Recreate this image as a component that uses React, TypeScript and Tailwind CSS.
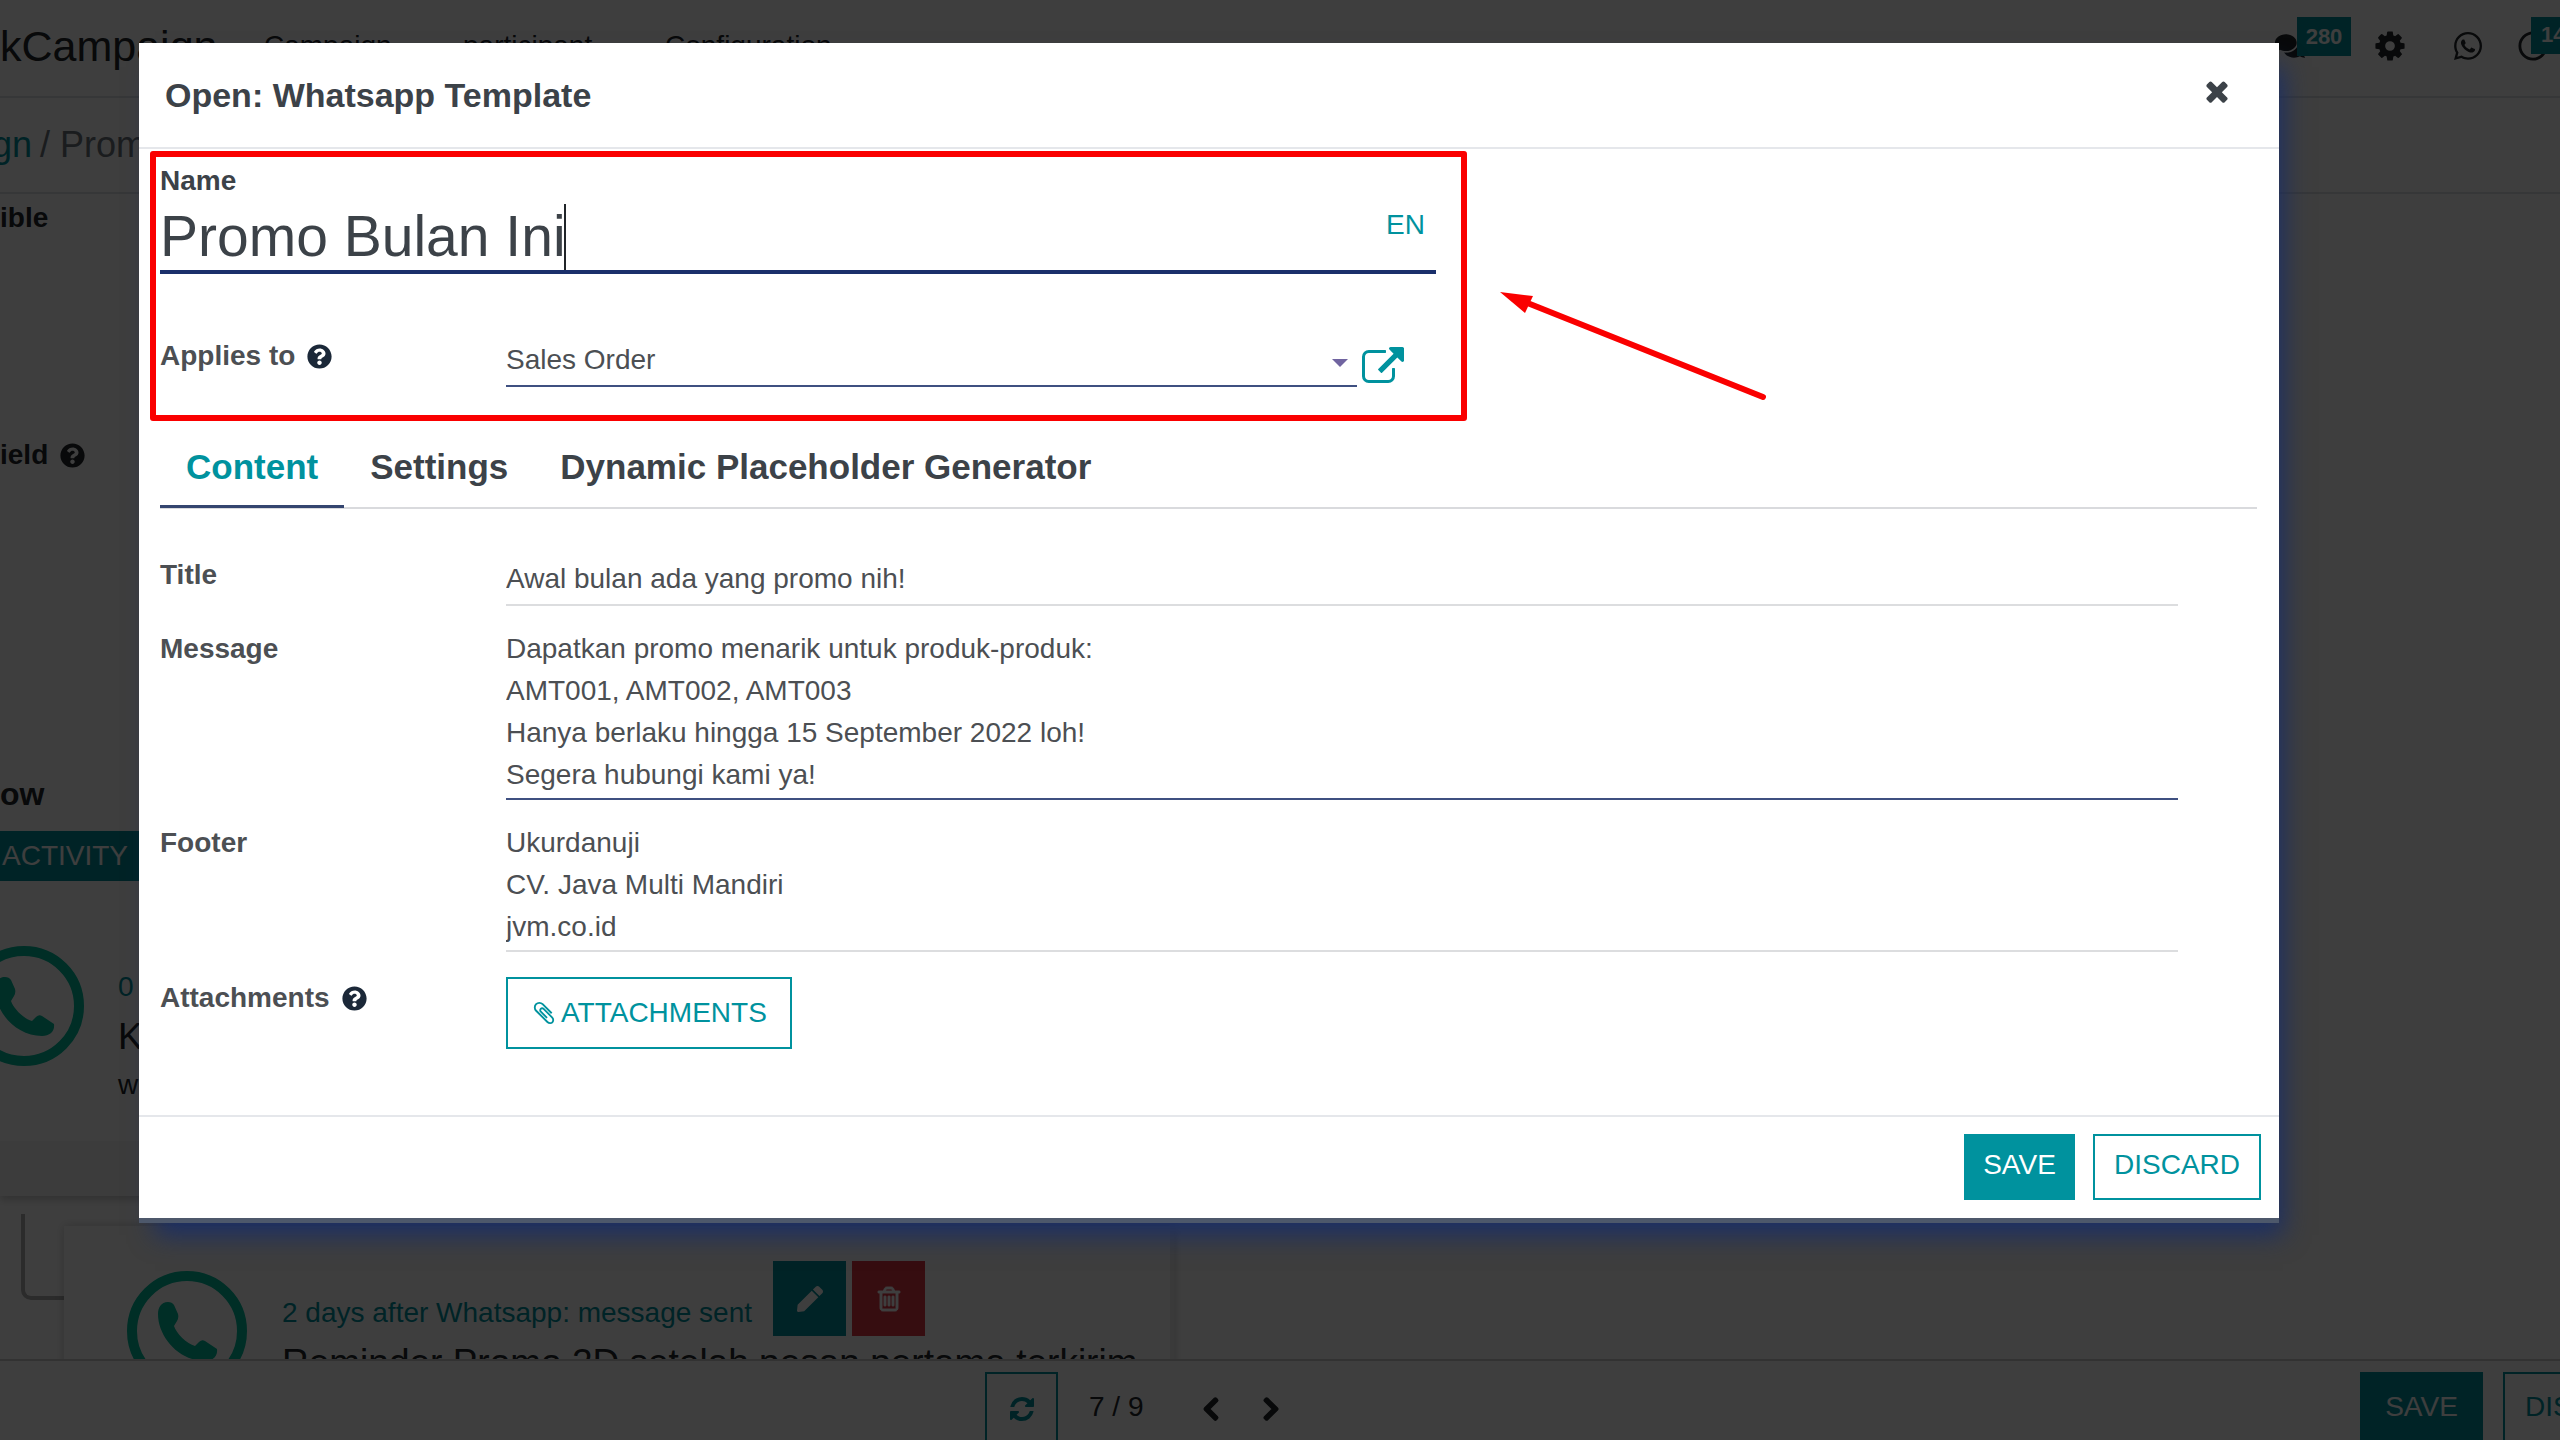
import React, { useState } from 'react';
import { FaChevronLeft, FaChevronRight, FaComments, FaPen, FaQuestionCircle, FaRegClock, FaWhatsapp } from 'react-icons/fa';

const ICONS = {
  close:
    'M1490 1322q0 40-28 68l-136 136q-28 28-68 28t-68-28l-294-294-294 294q-28 28-68 28t-68-28l-136-136q-28-28-28-68t28-68l294-294-294-294q-28-28-28-68t28-68l136-136q28-28 68-28t68 28l294 294 294-294q28-28 68-28t68 28l136 136q28 28 28 68t-28 68l-294 294 294 294q28 28 28 68z',
  trash:
    'M704 736v576q0 14-9 23t-23 9h-64q-14 0-23-9t-9-23v-576q0-14 9-23t23-9h64q14 0 23 9t9 23zm256 0v576q0 14-9 23t-23 9h-64q-14 0-23-9t-9-23v-576q0-14 9-23t23-9h64q14 0 23 9t9 23zm256 0v576q0 14-9 23t-23 9h-64q-14 0-23-9t-9-23v-576q0-14 9-23t23-9h64q14 0 23 9t9 23zm128 724v-948h-896v948q0 22 7 40.5t14.5 27 10.5 8.5h832q3 0 10.5-8.5t14.5-27 7-40.5zm-672-1076h448l-48-117q-7-9-17-11h-317q-10 2-17 11zm928 32v64q0 14-9 23t-23 9h-96v948q0 83-47 143.5t-113 60.5h-832q-66 0-113-58.5t-47-141.5v-952h-96q-14 0-23-9t-9-23v-64q0-14 9-23t23-9h309l70-167q15-37 54-63t79-26h320q40 0 79 26t54 63l70 167h309q14 0 23 9t9 23z',
  refresh:
    'M1639 1056q0 5-1 7-64 268-268 434.5t-478 166.5q-146 0-282.5-55t-243.5-157l-129 129q-19 19-45 19t-45-19-19-45v-448q0-26 19-45t45-19h448q26 0 45 19t19 45-19 45l-137 137q71 66 161 102t187 36q134 0 250-65t186-179q11-17 53-117 8-23 30-23h192q13 0 22.5 9.5t9.5 22.5zm25-800v448q0 26-19 45t-45 19h-448q-26 0-45-19t-19-45 19-45l138-138q-148-137-349-137-134 0-250 65t-186 179q-11 17-53 117-8 23-30 23h-199q-13 0-22.5-9.5t-9.5-22.5v-7q65-268 270-434.5t480-166.5q146 0 284 55.5t245 156.5l130-129q19-19 45-19t45 19 19 45z',
  external:
    'M1408 928v320q0 119-84.5 203.5t-203.5 84.5h-832q-119 0-203.5-84.5t-84.5-203.5v-832q0-119 84.5-203.5t203.5-84.5h704q14 0 23 9t9 23v64q0 14-9 23t-23 9h-704q-66 0-113 47t-47 113v832q0 66 47 113t113 47h832q66 0 113-47t47-113v-320q0-14 9-23t23-9h64q14 0 23 9t9 23zm384-864v512q0 26-19 45t-45 19-45-19l-176-176-652 652q-10 10-23 10t-23-10l-114-114q-10-10-10-23t10-23l652-652-176-176q-19-19-19-45t19-45 45-19h512q26 0 45 19t19 45z',
  cog:
    'M1152 896q0-106-75-181t-181-75-181 75-75 181 75 181 181 75 181-75 75-181zm512-109v222q0 12-8 23t-20 13l-185 28q-19 54-39 91 35 50 107 138 10 12 10 25t-9 23q-27 37-99 108t-94 71q-12 0-26-9l-138-108q-44 23-91 38-16 136-29 186-7 28-36 28h-222q-14 0-24.5-8.5t-11.5-21.5l-28-184q-49-16-90-37l-141 107q-10 9-25 9-14 0-25-11-126-114-165-168-7-10-7-23 0-12 8-23 15-21 51-66.5t54-70.5q-27-50-41-99l-183-27q-13-2-21-12.5t-8-23.5v-222q0-12 8-23t19-13l186-28q14-46 39-92-40-57-107-138-10-12-10-24 0-10 9-23 26-36 98.5-107.5t94.5-71.5q13 0 26 10l138 107q44-23 91-38 16-136 29-186 7-28 36-28h222q14 0 24.5 8.5t11.5 21.5l28 184q49 16 90 37l142-107q9-9 24-9 13 0 25 10 129 119 165 170 7 8 7 22 0 12-8 23-15 21-51 66.5t-54 70.5q26 50 41 98l183 28q13 2 21 12.5t8 23.5z',
  paperclip:
    'M1596 1385q0 117-79 196t-196 79q-135 0-235-100l-777-776q-113-115-113-271 0-159 110-270t269-111q158 0 273 113l605 606q10 10 10 22 0 16-30.5 46.5t-46.5 30.5q-13 0-23-10l-606-607q-79-77-181-77-106 0-179 75t-73 181q0 105 76 181l776 777q63 63 145 63 64 0 106-42t42-106q0-82-63-145l-581-581q-26-24-60-24-29 0-48 19t-19 48q0 32 25 59l410 410q10 10 10 22 0 16-31 47t-47 31q-12 0-22-10l-410-410q-63-61-63-149 0-82 57-139t139-57q88 0 149 63l581 581q100 98 100 235z',
};

const Icon: React.FC<{ name: keyof typeof ICONS; className?: string }> = ({ name, className }) => (
  <svg viewBox="0 0 1792 1792" fill="currentColor" aria-hidden="true" className={className}>
    <path d={ICONS[name]} />
  </svg>
);

const CallBadge: React.FC = () => (
  <svg viewBox="0 0 120 120" aria-hidden="true" className="h-[120px] w-[120px] shrink-0 text-[#00bb9c]">
    <circle cx="60" cy="60" r="55" fill="none" stroke="currentColor" strokeWidth="10" />
    <path
      d="M41 31C34 31 31 37 31 43C31 66 52 90 78 90C86 90 91 85 90 78L78 70Q75 68 72 71L68 75C60 73 49 62 47 55L50 50Q52 47 51 43L47 34Q45 31 41 31Z"
      fill="currentColor"
    />
  </svg>
);

const tabs = ['Content', 'Settings', 'Dynamic Placeholder Generator'];

const CampaignPage: React.FC = () => (
  <div className="flex h-screen flex-col overflow-hidden whitespace-nowrap bg-white text-[28px] leading-[42px] text-[#212529]">
    <header className="flex h-[98px] shrink-0 items-start justify-between overflow-hidden border-b-2 border-[#dee2e6]">
      <nav className="flex items-center pt-[22px]">
        <span className="w-[264px] text-[43px] leading-[48px]">kCampaign</span>
        <a href="#campaign" className="w-[199px]">Campaign</a>
        <a href="#participant" className="w-[202px]">participant</a>
        <a href="#configuration">Configuration</a>
      </nav>
      <div className="flex items-center pt-[29px]">
        <button aria-label="Messages" className="relative mr-[68px] h-[30px] w-[30px]">
          <FaComments className="h-[30px] w-[30px]" />
          <span className="absolute -top-[14px] left-[22px] h-[39px] w-[54px] bg-[#00929e] text-center text-[22px] font-bold leading-[39px] text-white">280</span>
        </button>
        <button aria-label="Settings" className="mr-[45px]"><Icon name="cog" className="h-[34px] w-[34px]" /></button>
        <button aria-label="Whatsapp" className="mr-[34px]"><FaWhatsapp className="h-[32px] w-[32px]" /></button>
        <button aria-label="Activities" className="relative h-[30px] w-[42px]">
          <FaRegClock className="h-[30px] w-[30px]" />
          <span className="absolute -top-[14px] left-[13px] h-[37px] w-[54px] bg-[#00929e] pl-[10px] text-left text-[22px] font-bold leading-[35px] text-white">14</span>
        </button>
      </div>
    </header>

    <div className="flex h-[96px] shrink-0 items-center border-b-2 border-[#dee2e6] text-[36px] text-[#6c757d]">
      <a href="#campaigns" className="-ml-[8px] mr-[8px] text-[#00929e]">gn</a>
      <span>/ Prom</span>
    </div>

    <main className="min-h-0 flex-1 overflow-hidden">
      <p className="pt-[3px] font-bold">ible</p>
      <p className="mt-[195px] flex items-center gap-[12px] font-bold">
        ield <FaQuestionCircle className="h-[25px] w-[25px]" />
      </p>
      <h2 className="mt-[297px] text-[32px] font-bold">ow</h2>
      <button className="mt-[16px] block h-[50px] w-[160px] bg-[#00929e] pl-[2px] text-left text-white">ACTIVITY</button>
      <section className="w-[1174px] shadow-[0_4px_8px_#00000033]">
        <div className="flex h-[260px] items-start pt-[65px]">
          <div className="-ml-[36px]"><CallBadge /></div>
          <div className="ml-[34px] pt-[20px]">
            <p className="text-[#00929e]">0</p>
            <p className="mt-[2px] text-[37px] leading-[54px]">K</p>
            <p>w</p>
          </div>
        </div>
        <div className="h-[55px] bg-[#f5f5f5]" />
      </section>
      <div className="mt-[18px] flex items-start pl-[21px]">
        <div className="h-[86px] w-[43px] rounded-bl-[10px] border-b-4 border-l-4 border-[#b0b0b0]" />
        <section className="mt-[12px] flex w-[1110px] items-start border-r-4 border-[#eeeeee] pl-[63px] pt-[35px] shadow-[0_0_10px_#00000033]">
          <div className="pt-[10px]"><CallBadge /></div>
          <div className="pl-[35px]">
            <div className="flex items-center gap-[6px]">
              <span className="mr-[7px] w-[478px] pt-[28px] text-[#00929e]">2 days after Whatsapp: message sent</span>
              <button aria-label="Edit" className="flex h-[75px] w-[73px] items-center justify-center bg-[#00929e] text-white">
                <FaPen className="h-[26px] w-[26px]" />
              </button>
              <button aria-label="Delete" className="flex h-[75px] w-[73px] items-center justify-center bg-[#dc3545] text-white">
                <Icon name="trash" className="h-[28px] w-[28px] stroke-current stroke-[60px]" />
              </button>
            </div>
            <p className="text-[37px] leading-[54px]">Reminder Promo 2D setelah pesan pertama terkirim</p>
          </div>
        </section>
      </div>
    </main>

    <footer className="flex h-[81px] shrink-0 items-start overflow-hidden border-t-2 border-[#cccccc] pt-[11px]">
      <div className="flex flex-1 items-center pl-[985px]">
        <button aria-label="Refresh" className="flex h-[73px] w-[73px] items-center justify-center border-2 border-[#00929e] text-[#00929e]">
          <Icon name="refresh" className="h-[28px] w-[28px]" />
        </button>
        <span className="ml-[31px] w-[112px] pb-[3px]">7 / 9</span>
        <button aria-label="Previous" className="w-[60px]"><FaChevronLeft className="h-[26px] w-[20px] stroke-current stroke-[30px]" /></button>
        <button aria-label="Next"><FaChevronRight className="h-[26px] w-[20px] stroke-current stroke-[30px]" /></button>
      </div>
      <button className="h-[73px] w-[123px] bg-[#00929e] pb-[3px] text-white">SAVE</button>
      <button className="-mr-[113px] ml-[20px] h-[73px] w-[170px] border-2 border-[#00929e] pb-[3px] text-[#00929e]">DISCARD</button>
    </footer>
  </div>
);

const TemplateDialog: React.FC = () => {
  const [name, setName] = useState('Promo Bulan Ini');
  const [activeTab, setActiveTab] = useState('Content');

  return (
    <div
      role="dialog"
      aria-labelledby="dialog-title"
      className="relative w-full border-b-[5px] border-[#4d586b] bg-white text-[28px] leading-[42px] text-[#4c4f53] shadow-[10px_18px_24px_-6px_#1b2f66]"
    >
      <header className="flex h-[106px] items-center justify-between border-b-2 border-[#e5e7eb] pl-[26px] pr-[46px]">
        <h1 id="dialog-title" className="text-[34px] font-bold text-[#3c4248]">Open: Whatsapp Template</h1>
        <button aria-label="Close" className="pb-[8px] text-[#3c4248]"><Icon name="close" className="h-[32px] w-[32px]" /></button>
      </header>

      <div className="relative pb-[66px] pl-[21px] pr-[22px] pt-[11px]">
        <div className="w-[1276px]">
          <label htmlFor="name" className="block font-bold text-[#3c4248]">Name</label>
          <div className="relative flex h-[72px] items-center border-b-4 border-[#1a2f6b]">
            <input
              id="name"
              value={name}
              onChange={(e) => setName(e.target.value)}
              className="h-[68px] min-w-0 flex-1 text-[57px] text-[#3c4248] outline-none"
            />
            <span className="absolute left-[404px] top-[2px] h-[66px] w-[2px] bg-[#212529]" />
            <button className="mb-[22px] mr-[11px] text-[#00929e]">EN</button>
          </div>
          <div className="mt-[61px] flex items-start">
            <label htmlFor="model" className="flex w-[346px] items-center gap-[12px] font-bold">
              Applies to <FaQuestionCircle className="h-[25px] w-[25px] text-[#1b2838]" />
            </label>
            <div className="relative w-[851px] pt-[4px]">
              <select id="model" className="block h-[48px] w-full appearance-none border-b-2 border-[#3f5081] pb-[4px] outline-none">
                <option>Sales Order</option>
              </select>
              <span className="pointer-events-none absolute right-[9px] top-[24px] border-x-8 border-t-8 border-x-transparent border-t-[#7064a0]" />
            </div>
            <button aria-label="External link" className="ml-[5px] mt-[12px] text-[#00929e]">
              <Icon name="external" className="h-[42px] w-[42px]" />
            </button>
          </div>
        </div>

        <div role="tablist" className="mt-[43px] flex border-b-2 border-[#d9dadd]">
          {tabs.map((tab) => (
            <button
              key={tab}
              role="tab"
              aria-selected={tab === activeTab}
              onClick={() => setActiveTab(tab)}
              className={`-mb-px border-b-[3px] px-[26px] pb-[17px] pt-[14px] text-[35px] font-bold ${
                tab === activeTab ? 'border-[#34456f] text-[#00929e]' : 'border-transparent text-[#3c4248]'
              }`}
            >
              {tab}
            </button>
          ))}
        </div>

        <div className="mt-[45px] grid grid-cols-[346px_1fr] gap-y-[22px] pr-[79px]">
          <label htmlFor="title" className="font-bold">Title</label>
          <input id="title" defaultValue="Awal bulan ada yang promo nih!" className="mt-[4px] h-[48px] border-b-2 border-[#dcdddf] pb-[4px] outline-none" />

          <label htmlFor="message" className="font-bold">Message</label>
          <textarea
            id="message"
            rows={4}
            defaultValue={'Dapatkan promo menarik untuk produk-produk:\nAMT001, AMT002, AMT003\nHanya berlaku hingga 15 September 2022 loh!\nSegera hubungi kami ya!'}
            className="block resize-none overflow-hidden border-b-2 border-[#3f5081] pb-[2px] outline-none"
          />

          <label htmlFor="footer" className="font-bold">Footer</label>
          <textarea
            id="footer"
            rows={3}
            defaultValue={'Ukurdanuji\nCV. Java Multi Mandiri\njvm.co.id'}
            className="block resize-none overflow-hidden border-b-2 border-[#dcdddf] pb-[2px] outline-none"
          />

          <span className="mt-[3px] flex items-center gap-[12px] self-start font-bold">
            Attachments <FaQuestionCircle className="h-[25px] w-[25px] text-[#1b2838]" />
          </span>
          <button className="mt-[3px] flex h-[72px] items-center gap-[4px] justify-self-start border-2 border-[#00929e] px-[23px] text-[#00929e]">
            <Icon name="paperclip" className="h-[26px] w-[26px]" />
            ATTACHMENTS
          </button>
        </div>

        {/* callout around the name and model fields */}
        <div className="pointer-events-none absolute left-[11px] top-[2px] h-[270px] w-[1317px] rounded-[3px] border-[6px] border-[#fa0000]" />
        <svg viewBox="0 0 270 112" className="pointer-events-none absolute left-[1361px] top-[142px] h-[112px] w-[270px]" aria-hidden="true">
          <path d="M30 13 263 106" stroke="#fa0000" strokeWidth="6" strokeLinecap="round" />
          <path d="M0 1 33 5 25 22Z" fill="#fa0000" />
        </svg>
      </div>

      <footer className="flex justify-end gap-[18px] border-t-2 border-[#e5e7eb] pb-[18px] pr-[18px] pt-[17px]">
        <button className="h-[66px] w-[111px] bg-[#00929e] pb-[4px] text-white">SAVE</button>
        <button className="h-[66px] w-[168px] border-2 border-[#00929e] pb-[4px] text-[#00929e]">DISCARD</button>
      </footer>
    </div>
  );
};

export default function App() {
  return (
    <div className="relative font-['Liberation_Sans',Arial,sans-serif]">
      <CampaignPage />
      <div className="absolute inset-0 bg-[#000000c1] pl-[139px] pr-[281px] pt-[43px]">
        <TemplateDialog />
      </div>
    </div>
  );
}
